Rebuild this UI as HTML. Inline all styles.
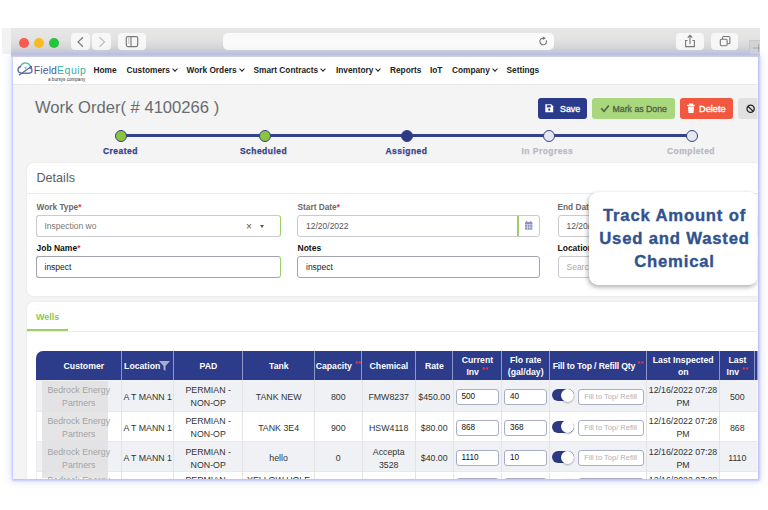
<!DOCTYPE html>
<html><head><meta charset="utf-8">
<style>
*{box-sizing:border-box;margin:0;padding:0}
html,body{width:768px;height:510px;overflow:hidden;background:#fff;font-family:"Liberation Sans",sans-serif;}
.a{position:absolute}
#strip{left:2px;top:28px;width:9px;height:26px;background:#f2f2f2}
#tb{left:11px;top:28px;width:749px;height:26px;background:linear-gradient(#e8e8e8 0%,#e2e2e2 45%,#d6d6d9 75%,#c4c6da 100%)}
.tl{width:10px;height:10px;border-radius:50%;top:38px}
.tbtn{background:#f7f7f7;border-radius:4px;top:33px;height:17px}
#win{left:13px;top:57px;width:744.5px;height:422px;background:#f4f4f4;box-shadow:0 0 2px 1.5px rgba(150,160,255,.55),0 0 9px 2px rgba(150,160,255,.3)}
#clip{left:0;top:0;width:768px;height:510px;clip-path:inset(57px 10.5px 31px 13px)}
#nav{left:13px;top:57px;width:745px;height:28px;background:#fff;border-bottom:1px solid #e9e9e9}
.nv{top:65px;font-size:8.3px;font-weight:bold;color:#222;white-space:nowrap;line-height:10px}
.chev{display:inline-block;width:4px;height:4px;border-right:1.3px solid #222;border-bottom:1.3px solid #222;transform:rotate(45deg);margin-left:3px;position:relative;top:-2px}
.btn{top:98px;height:21px;border-radius:3px;color:#fff;font-size:9px;font-weight:bold;line-height:23px;white-space:nowrap}
.circ{width:12px;height:12px;border-radius:50%;border:1.5px solid #34428a;top:129.5px}
.stl{top:146px;font-family:"Liberation Sans",sans-serif;font-weight:bold;font-size:8.5px;color:#34428a;white-space:nowrap;letter-spacing:.45px;-webkit-text-stroke:.25px currentColor}
.card{background:#fff;border-radius:7px;box-shadow:0 0 3px rgba(0,0,0,.07)}
.lbl{font-size:8.5px;color:#555;white-space:nowrap;line-height:10px}
.lbl b{color:#111}
.req{color:#e53935;font-weight:bold}
.inp{background:#fff;border:1px solid #c9c9cf;border-radius:3px;height:21.5px;font-size:8.5px;color:#333;line-height:20.5px;padding-left:8px;white-space:nowrap;overflow:hidden}
.th{top:351px;height:29px;color:#fff;font-size:8.7px;font-weight:bold;text-align:center;display:flex;align-items:center;justify-content:center;line-height:12px;border-left:1.2px solid #8d96c8}
.row{left:36px;width:722px}
.td{z-index:1;font-size:8.8px;color:#333;text-align:center;display:flex;align-items:center;justify-content:center;line-height:12.8px;border-left:1px solid #e3e3e3;padding-top:1.5px}
.ti{background:#fff;border:1px solid #a9aec6;border-radius:3px;height:16px;font-size:8.2px;color:#111;line-height:14px;padding-left:5px;white-space:nowrap;overflow:hidden}
.tog{width:22px;height:12px;border-radius:6px;background:#2c3a86}
.tog:after{content:"";position:absolute;right:-.5px;top:-.5px;width:13px;height:13px;border-radius:50%;background:#fff;box-shadow:0 1px 2px rgba(0,0,0,.3)}
.ast{color:#e53935;font-size:7px;line-height:0;vertical-align:3px;margin-left:3px;letter-spacing:.5px}
</style></head><body>
<div class="a" id="strip"></div>
<div class="a" id="tb"></div>
<div class="a tl" style="left:19px;background:#f85b4f"></div>
<div class="a tl" style="left:34px;background:#f9bb24"></div>
<div class="a tl" style="left:49px;background:#22c53c"></div>
<div class="a tbtn" style="left:71px;width:19px"></div>
<div class="a tbtn" style="left:92px;width:19px"></div>
<div class="a tbtn" style="left:118px;width:28px"></div>
<div class="a tbtn" style="left:223px;width:330.5px;background:#fafafa;border-radius:5px"></div>
<div class="a tbtn" style="left:676px;width:28px"></div>
<div class="a tbtn" style="left:711px;width:27px"></div>
<div class="a" style="left:749px;top:39.5px;width:11px;height:16px;background:#d3d3d6;border-left:1px solid #c8c8cc;border-top:1px solid #c8c8cc"></div>
<svg class="a" style="left:0;top:0" width="768" height="60" viewBox="0 0 768 60">
<path d="M83 37.3L78 42L83 46.7" fill="none" stroke="#7a7a7a" stroke-width="1.2"/>
<path d="M99.5 37.3L104.5 42L99.5 46.7" fill="none" stroke="#c0c0c0" stroke-width="1.2"/>
<rect x="126.3" y="36.6" width="11.4" height="10" rx="1.5" fill="none" stroke="#7a7a7a" stroke-width="1.2"/>
<path d="M131 36.6V46.6" stroke="#7a7a7a" stroke-width="1.1"/>
<path d="M128 39H129.5M128 41H129.5M128 43H129.5" stroke="#999" stroke-width=".8"/>
<path d="M546.2 40.2A3.3 3.3 0 1 1 543.3 38.2" fill="none" stroke="#777" stroke-width="1.1"/>
<path d="M542.8 36.4L546 38.2L542.8 40Z" fill="#777"/>
<path d="M687.5 40.5H685.6V46.6H694.4V40.5H692.5" fill="none" stroke="#777" stroke-width="1.1"/>
<path d="M690 44V35.5M687.7 37.7L690 35.3L692.3 37.7" fill="none" stroke="#777" stroke-width="1.1"/>
<rect x="720.3" y="39.2" width="6.8" height="6.6" rx="1.2" fill="none" stroke="#777" stroke-width="1.1"/>
<path d="M722.5 39.2V37.8Q722.5 36.5 723.8 36.5H728.6Q729.9 36.5 729.9 37.8V42.4Q729.9 43.7 728.6 43.7H727.1" fill="none" stroke="#777" stroke-width="1.1"/>
<path d="M753 48H760M758.5 44V52" stroke="#a0a0a4" stroke-width=".8"/>
</svg>

<div class="a" id="win"></div>
<div class="a" style="left:11px;top:53.5px;width:749px;height:4px;background:linear-gradient(#babdd6,#d4d7fc)"></div>
<div class="a" id="clip">
  <div class="a" id="nav"></div>
  <!-- logo -->
  <div class="a" style="left:33.8px;top:63.5px;font-size:10.5px;line-height:12px;letter-spacing:.1px;white-space:nowrap"><span style="color:#4b5898">Field</span><span style="color:#3aaea6;letter-spacing:.5px">Equip</span></div>
  <div class="a" style="left:48px;top:77px;font-size:4.6px;line-height:5px;color:#333;white-space:nowrap">a bursys company</div>
  <svg class="a" style="left:15px;top:60px" width="20" height="18" viewBox="0 0 20 18">
<path d="M5 7Q7 2.8 10.5 3Q14 3 15.5 6.5" fill="none" stroke="#5cc2b5" stroke-width="1.6"/>
<path d="M9 7.5L12 6L11 9.5" fill="#74cfc2"/>
<path d="M6 6.5Q3 7 3 10Q3.2 13 6.5 13.2H14Q17 13 17 10.5Q17 8 14.5 8" fill="none" stroke="#6474ad" stroke-width="1.4"/>
<path d="M4 15.2L16 6.8" stroke="#5a6aa6" stroke-width="1.3"/>
<circle cx="16" cy="7" r="1.2" fill="#5a6aa6"/>
</svg>

  <div class="a nv" style="left:93.5px">Home</div>
  <div class="a nv" style="left:126.5px">Customers<span class="chev"></span></div>
  <div class="a nv" style="left:186.5px">Work Orders<span class="chev"></span></div>
  <div class="a nv" style="left:253.5px">Smart Contracts<span class="chev"></span></div>
  <div class="a nv" style="left:336px">Inventory<span class="chev"></span></div>
  <div class="a nv" style="left:390px">Reports</div>
  <div class="a nv" style="left:430px">IoT</div>
  <div class="a nv" style="left:452px">Company<span class="chev"></span></div>
  <div class="a nv" style="left:506.5px">Settings</div>

  <!-- title -->
  <div class="a" style="left:35px;top:98.5px;font-size:16.6px;line-height:18px;color:#686b70;white-space:nowrap">Work Order( # 4100266 )</div>

  <!-- buttons -->
  <div class="a btn" style="left:538px;width:49px;background:#2b3b8c;padding-left:22px;font-weight:normal;-webkit-text-stroke:.35px #fff;font-size:8.9px">Save</div>
  <div class="a btn" style="left:592px;width:83px;background:#a9d77e;color:#4f6145;font-weight:normal;padding-left:20.5px;-webkit-text-stroke:.3px #4f6145;font-size:8.75px">Mark as Done</div>
  <div class="a btn" style="left:680px;width:53px;background:#f2573f;padding-left:19px;font-weight:normal;-webkit-text-stroke:.35px #fff;font-size:9.2px">Delete</div>
  <div class="a btn" style="left:738px;width:40px;background:#e1e1e1"></div>
<svg class="a" style="left:530px;top:95px" width="238" height="28" viewBox="530 95 238 28">
<path d="M545.3 104.3H551.2L553.2 106.3V112.2H545.3Z" fill="#fff"/>
<rect x="546.8" y="105.2" width="4" height="2.2" fill="#2b3b8c"/>
<circle cx="549.2" cy="109.7" r="1.1" fill="#2b3b8c"/>
<path d="M601.2 108.3L604 111.2L608.8 105.6" fill="none" stroke="#4e6145" stroke-width="1.6"/>
<path d="M687.2 105.3H694.8M689.6 105.3V104.2H692.4V105.3" fill="none" stroke="#fff" stroke-width="1.2"/>
<path d="M687.9 106.5H694.1L693.5 113H688.5Z" fill="#fff"/>
<circle cx="750.6" cy="108.8" r="3.6" fill="none" stroke="#222" stroke-width="1.3"/>
<path d="M748 106.2L753.2 111.4" stroke="#222" stroke-width="1.3"/>
</svg>

  <!-- stepper -->
  <div class="a" style="left:121px;top:134.4px;width:571px;height:2.2px;background:#34428a"></div>
  <div class="a circ" style="left:115px;background:#8cc43e"></div>
  <div class="a circ" style="left:258.5px;background:#8cc43e"></div>
  <div class="a circ" style="left:400.5px;background:#2c3a86"></div>
  <div class="a circ" style="left:542.5px;background:#e6e7ef"></div>
  <div class="a circ" style="left:686px;background:#e6e7ef"></div>
  <div class="a stl" style="left:103px">Created</div>
  <div class="a stl" style="left:240px">Scheduled</div>
  <div class="a stl" style="left:385.5px">Assigned</div>
  <div class="a stl" style="left:521.5px;color:#b9bac4">In Progress</div>
  <div class="a stl" style="left:667px;color:#b9bac4">Completed</div>

  <!-- details card -->
  <div class="a card" style="left:27px;top:163px;width:760px;height:133px"></div>
  <div class="a" style="left:27px;top:193px;width:760px;height:1px;background:#ececec"></div>
  <div class="a" style="left:36.5px;top:171px;font-size:12.6px;line-height:15px;color:#5a5d62;white-space:nowrap">Details</div>

  <div class="a lbl" style="left:36.5px;top:202px;font-weight:bold;color:#6a6a6a;font-size:8.3px">Work Type<span class="req">*</span></div>
  <div class="a inp" style="left:35.5px;top:215px;width:245px;color:#777;border-right:1.6px solid #9ccf6a">Inspection wo</div>
  <div class="a" style="left:246px;top:220.5px;font-size:10px;line-height:11px;color:#555">×</div>
  <div class="a" style="left:259.5px;top:224.5px;width:0;height:0;border-left:2.7px solid transparent;border-right:2.7px solid transparent;border-top:3.3px solid #555"></div>

  <div class="a lbl" style="left:297.5px;top:202px;font-weight:bold;color:#6a6a6a;font-size:8.3px">Start Date<span class="req">*</span></div>
  <div class="a inp" style="left:297px;top:215px;width:243px;color:#555">12/20/2022</div>
  <div class="a" style="left:517.2px;top:216px;width:1.6px;height:20px;background:#9ccf6a"></div>
  <svg class="a" style="left:524px;top:220px" width="10" height="11" viewBox="0 0 10 11"><rect x="1" y="2" width="7.4" height="7.8" rx="1" fill="#8990c2"/><path d="M2.6 1V3M6.8 1V3" stroke="#8990c2" stroke-width="1"/><path d="M1 4.6H8.4M3.5 4.6V9.8M5.9 4.6V9.8M1 7.2H8.4" stroke="#fff" stroke-width=".5"/></svg>

  <div class="a lbl" style="left:557.5px;top:202px;font-weight:bold;color:#6a6a6a;font-size:8.3px">End Date</div>
  <div class="a inp" style="left:557.5px;top:215px;width:200px;color:#555">12/20/2022</div>

  <div class="a lbl" style="left:36.5px;top:243px"><b>Job Name</b><span class="req">*</span></div>
  <div class="a inp" style="left:35.5px;top:256px;width:245px;border-color:#a3a3ad;color:#222;border-right:1.6px solid #9ccf6a">inspect</div>
  <div class="a lbl" style="left:297.5px;top:243px"><b>Notes</b></div>
  <div class="a inp" style="left:297px;top:256px;width:243px;border-color:#a3a3ad;color:#222">inspect</div>
  <div class="a lbl" style="left:557.5px;top:243px"><b>Location</b></div>
  <div class="a inp" style="left:557.5px;top:256px;width:200px;color:#aaa">Search</div>

  <!-- callout -->
  <div class="a" style="left:588.5px;top:191.5px;width:169px;height:93px;background:#fff;border-radius:9px;box-shadow:-1px 2px 5px rgba(0,0,0,.33)"></div>
  <div class="a" style="left:590px;top:203.5px;width:169px;text-align:center;font-size:16.7px;line-height:23px;letter-spacing:.8px;font-weight:bold;color:#30528f;-webkit-text-stroke:.35px #30528f">Track Amount of<br>Used and Wasted<br>Chemical</div>

  <!-- wells card -->
  <div class="a card" style="left:27px;top:302px;width:760px;height:240px"></div>
  <div class="a" style="left:27px;top:331px;width:760px;height:1px;background:#ececec"></div>
  <div class="a" style="left:27px;top:329px;width:41px;height:2px;background:#9ccf6a"></div>
  <div class="a" style="left:36px;top:312px;font-size:9px;font-weight:bold;color:#8fc655;line-height:11px">Wells</div>

  <!-- table header -->
  <div class="a" style="left:36px;top:351px;width:740px;height:29px;background:#2c3b8a;border-radius:7px 0 0 0"></div>
  <div class="a th" style="left:36px;width:85.7px;border-left:none;padding-left:10px"><span>Customer</span></div>
  <div class="a th" style="left:121.1px;width:52.7px;justify-content:flex-start;padding-left:2px"><span>Location<svg width="11" height="10" viewBox="0 0 11 10" style="margin-left:-1px;vertical-align:-2px"><path d="M0 0H11L6.5 5V10L4.5 8.6V5Z" fill="#a9aed0"/></svg></span></div>
  <div class="a th" style="left:173.2px;width:69.4px"><span>PAD</span></div>
  <div class="a th" style="left:242.0px;width:72.6px"><span>Tank</span></div>
  <div class="a th" style="left:314.0px;width:48.0px"><span>Capacity<span class="ast">**</span></span></div>
  <div class="a th" style="left:361.4px;width:54.0px"><span>Chemical</span></div>
  <div class="a th" style="left:414.8px;width:38.2px"><span>Rate</span></div>
  <div class="a th" style="left:452.4px;width:49.0px"><span>Current<br>Inv<span class="ast">**</span></span></div>
  <div class="a th" style="left:500.8px;width:48.8px"><span>Flo rate<br>(gal/day)</span></div>
  <div class="a th" style="left:549.0px;width:97.4px"><span style="letter-spacing:-.15px">Fill to Top / Refill Qty<span class="ast" style="margin-left:2px">**</span></span></div>
  <div class="a th" style="left:645.8px;width:73.9px"><span>Last Inspected<br>on</span></div>
  <div class="a th" style="left:719.1px;width:35.8px"><span>Last<br>Inv<span class="ast">**</span></span></div>
  <div class="a th" style="left:754.3px;width:31.3px"><span></span></div>

  <div id="rows"><div class="a" style="left:36.3px;top:380.3px;width:740px;height:31.399999999999977px;background:#eff1f4;border-bottom:1px solid #e9e9ec;border-left:1px solid #ececee"></div>
<div class="a td" style="left:36.3px;top:380.3px;width:84.9px;height:31.399999999999977px;border-left:none;color:#a3a3a3;padding-top:2.6px;"><span style="position:relative;left:0px">Bedrock Energy<br>Partners</span></div>
<div class="a td" style="left:121.2px;top:380.3px;width:52.10000000000001px;height:31.399999999999977px;padding-top:2.6px;">A T MANN 1</div>
<div class="a td" style="left:173.3px;top:380.3px;width:68.79999999999998px;height:31.399999999999977px;padding-top:2.6px;">PERMIAN -<br>NON-OP</div>
<div class="a td" style="left:242.1px;top:380.3px;width:72.00000000000003px;height:31.399999999999977px;padding-top:2.6px;">TANK NEW</div>
<div class="a td" style="left:314.1px;top:380.3px;width:47.39999999999998px;height:31.399999999999977px;padding-top:2.6px;">800</div>
<div class="a td" style="left:361.5px;top:380.3px;width:53.39999999999998px;height:31.399999999999977px;padding-top:2.6px;">FMW8237</div>
<div class="a td" style="left:414.9px;top:380.3px;width:37.60000000000002px;height:31.399999999999977px;padding-top:2.6px;">$450.00</div>
<div class="a td" style="left:452.5px;top:380.3px;width:48.39999999999998px;height:31.399999999999977px"></div>
<div class="a ti" style="left:455.5px;top:388.5px;width:43.09999999999998px">500</div>
<div class="a td" style="left:500.9px;top:380.3px;width:48.200000000000045px;height:31.399999999999977px"></div>
<div class="a ti" style="left:503.9px;top:388.5px;width:42.90000000000005px">40</div>
<div class="a td" style="left:549.1px;top:380.3px;width:96.79999999999995px;height:31.399999999999977px"></div>
<div class="a tog" style="left:551.9px;top:389.40000000000003px"></div>
<div class="a ti" style="left:578.2px;top:388.5px;width:66px;color:#b0b0b8;font-size:7.5px">Fill to Top/ Refill</div>
<div class="a td" style="left:645.9px;top:380.3px;width:73.30000000000007px;height:31.399999999999977px;padding-top:2.6px;">12/16/2022 07:28<br>PM</div>
<div class="a td" style="left:719.2px;top:380.3px;width:35.19999999999993px;height:31.399999999999977px;padding-top:2.6px;">500</div>
<div class="a" style="left:36.3px;top:411.7px;width:740px;height:30.400000000000034px;background:#ffffff;border-bottom:1px solid #e9e9ec;border-left:1px solid #ececee"></div>
<div class="a td" style="left:36.3px;top:411.7px;width:84.9px;height:30.400000000000034px;border-left:none;color:#a3a3a3;padding-top:2.6px;"><span style="position:relative;left:0px">Bedrock Energy<br>Partners</span></div>
<div class="a td" style="left:121.2px;top:411.7px;width:52.10000000000001px;height:30.400000000000034px;padding-top:2.6px;">A T MANN 1</div>
<div class="a td" style="left:173.3px;top:411.7px;width:68.79999999999998px;height:30.400000000000034px;padding-top:2.6px;">PERMIAN -<br>NON-OP</div>
<div class="a td" style="left:242.1px;top:411.7px;width:72.00000000000003px;height:30.400000000000034px;padding-top:2.6px;">TANK 3E4</div>
<div class="a td" style="left:314.1px;top:411.7px;width:47.39999999999998px;height:30.400000000000034px;padding-top:2.6px;">900</div>
<div class="a td" style="left:361.5px;top:411.7px;width:53.39999999999998px;height:30.400000000000034px;padding-top:2.6px;">HSW4118</div>
<div class="a td" style="left:414.9px;top:411.7px;width:37.60000000000002px;height:30.400000000000034px;padding-top:2.6px;">$80.00</div>
<div class="a td" style="left:452.5px;top:411.7px;width:48.39999999999998px;height:30.400000000000034px"></div>
<div class="a ti" style="left:455.5px;top:419.9px;width:43.09999999999998px">868</div>
<div class="a td" style="left:500.9px;top:411.7px;width:48.200000000000045px;height:30.400000000000034px"></div>
<div class="a ti" style="left:503.9px;top:419.9px;width:42.90000000000005px">368</div>
<div class="a td" style="left:549.1px;top:411.7px;width:96.79999999999995px;height:30.400000000000034px"></div>
<div class="a tog" style="left:551.9px;top:420.8px"></div>
<div class="a ti" style="left:578.2px;top:419.9px;width:66px;color:#b0b0b8;font-size:7.5px">Fill to Top/ Refill</div>
<div class="a td" style="left:645.9px;top:411.7px;width:73.30000000000007px;height:30.400000000000034px;padding-top:2.6px;">12/16/2022 07:28<br>PM</div>
<div class="a td" style="left:719.2px;top:411.7px;width:35.19999999999993px;height:30.400000000000034px;padding-top:2.6px;">868</div>
<div class="a" style="left:36.3px;top:442.1px;width:740px;height:30.399999999999977px;background:#eff1f4;border-bottom:1px solid #e9e9ec;border-left:1px solid #ececee"></div>
<div class="a td" style="left:36.3px;top:442.1px;width:84.9px;height:30.399999999999977px;border-left:none;color:#a3a3a3;padding-top:2.6px;"><span style="position:relative;left:0px">Bedrock Energy<br>Partners</span></div>
<div class="a td" style="left:121.2px;top:442.1px;width:52.10000000000001px;height:30.399999999999977px;padding-top:2.6px;">A T MANN 1</div>
<div class="a td" style="left:173.3px;top:442.1px;width:68.79999999999998px;height:30.399999999999977px;padding-top:2.6px;">PERMIAN -<br>NON-OP</div>
<div class="a td" style="left:242.1px;top:442.1px;width:72.00000000000003px;height:30.399999999999977px;padding-top:2.6px;">hello</div>
<div class="a td" style="left:314.1px;top:442.1px;width:47.39999999999998px;height:30.399999999999977px;padding-top:2.6px;">0</div>
<div class="a td" style="left:361.5px;top:442.1px;width:53.39999999999998px;height:30.399999999999977px;padding-top:2.6px;">Accepta<br>3528</div>
<div class="a td" style="left:414.9px;top:442.1px;width:37.60000000000002px;height:30.399999999999977px;padding-top:2.6px;">$40.00</div>
<div class="a td" style="left:452.5px;top:442.1px;width:48.39999999999998px;height:30.399999999999977px"></div>
<div class="a ti" style="left:455.5px;top:450.3px;width:43.09999999999998px">1110</div>
<div class="a td" style="left:500.9px;top:442.1px;width:48.200000000000045px;height:30.399999999999977px"></div>
<div class="a ti" style="left:503.9px;top:450.3px;width:42.90000000000005px">10</div>
<div class="a td" style="left:549.1px;top:442.1px;width:96.79999999999995px;height:30.399999999999977px"></div>
<div class="a tog" style="left:551.9px;top:451.20000000000005px"></div>
<div class="a ti" style="left:578.2px;top:450.3px;width:66px;color:#b0b0b8;font-size:7.5px">Fill to Top/ Refill</div>
<div class="a td" style="left:645.9px;top:442.1px;width:73.30000000000007px;height:30.399999999999977px;padding-top:2.6px;">12/16/2022 07:28<br>PM</div>
<div class="a td" style="left:719.2px;top:442.1px;width:35.19999999999993px;height:30.399999999999977px;padding-top:2.6px;">1110</div>
<div class="a" style="left:36.3px;top:472.5px;width:740px;height:30.5px;background:#ffffff;border-bottom:1px solid #e9e9ec;border-left:1px solid #ececee"></div>
<div class="a td" style="left:36.3px;top:472.5px;width:84.9px;height:30.5px;border-left:none;color:#a3a3a3;padding-top:0px;margin-top:-1px"><span style="position:relative;left:0px">Bedrock Energy<br>Partners</span></div>
<div class="a td" style="left:121.2px;top:472.5px;width:52.10000000000001px;height:30.5px;padding-top:0px;margin-top:-1px">A T MANN 1</div>
<div class="a td" style="left:173.3px;top:472.5px;width:68.79999999999998px;height:30.5px;padding-top:0px;margin-top:-1px">PERMIAN -<br>NON-OP</div>
<div class="a td" style="left:242.1px;top:472.5px;width:72.00000000000003px;height:30.5px;padding-top:0px;margin-top:-1px">YELLOW HOLE<br>TANK</div>
<div class="a td" style="left:314.1px;top:472.5px;width:47.39999999999998px;height:30.5px;padding-top:0px;margin-top:-1px">0</div>
<div class="a td" style="left:361.5px;top:472.5px;width:53.39999999999998px;height:30.5px;padding-top:0px;margin-top:-1px">FMW8237</div>
<div class="a td" style="left:414.9px;top:472.5px;width:37.60000000000002px;height:30.5px;padding-top:0px;margin-top:-1px">$40.00</div>
<div class="a td" style="left:452.5px;top:472.5px;width:48.39999999999998px;height:30.5px"></div>
<div class="a ti" style="left:455.5px;top:478.0px;width:43.09999999999998px">100</div>
<div class="a td" style="left:500.9px;top:472.5px;width:48.200000000000045px;height:30.5px"></div>
<div class="a ti" style="left:503.9px;top:478.0px;width:42.90000000000005px">10</div>
<div class="a td" style="left:549.1px;top:472.5px;width:96.79999999999995px;height:30.5px"></div>
<div class="a tog" style="left:551.9px;top:478.90000000000003px"></div>
<div class="a ti" style="left:578.2px;top:478.0px;width:66px;color:#b0b0b8;font-size:7.5px">Fill to Top/ Refill</div>
<div class="a td" style="left:645.9px;top:472.5px;width:73.30000000000007px;height:30.5px;padding-top:0px;margin-top:-1px">12/16/2022 07:28<br>PM</div>
<div class="a td" style="left:719.2px;top:472.5px;width:35.19999999999993px;height:30.5px;padding-top:0px;margin-top:-1px">100</div>
<div class="a" style="left:42px;top:381.4px;width:65.5px;height:96.4px;background:rgba(225,225,226,.85)"></div></div><!--rows-->
</div>
</body></html>
